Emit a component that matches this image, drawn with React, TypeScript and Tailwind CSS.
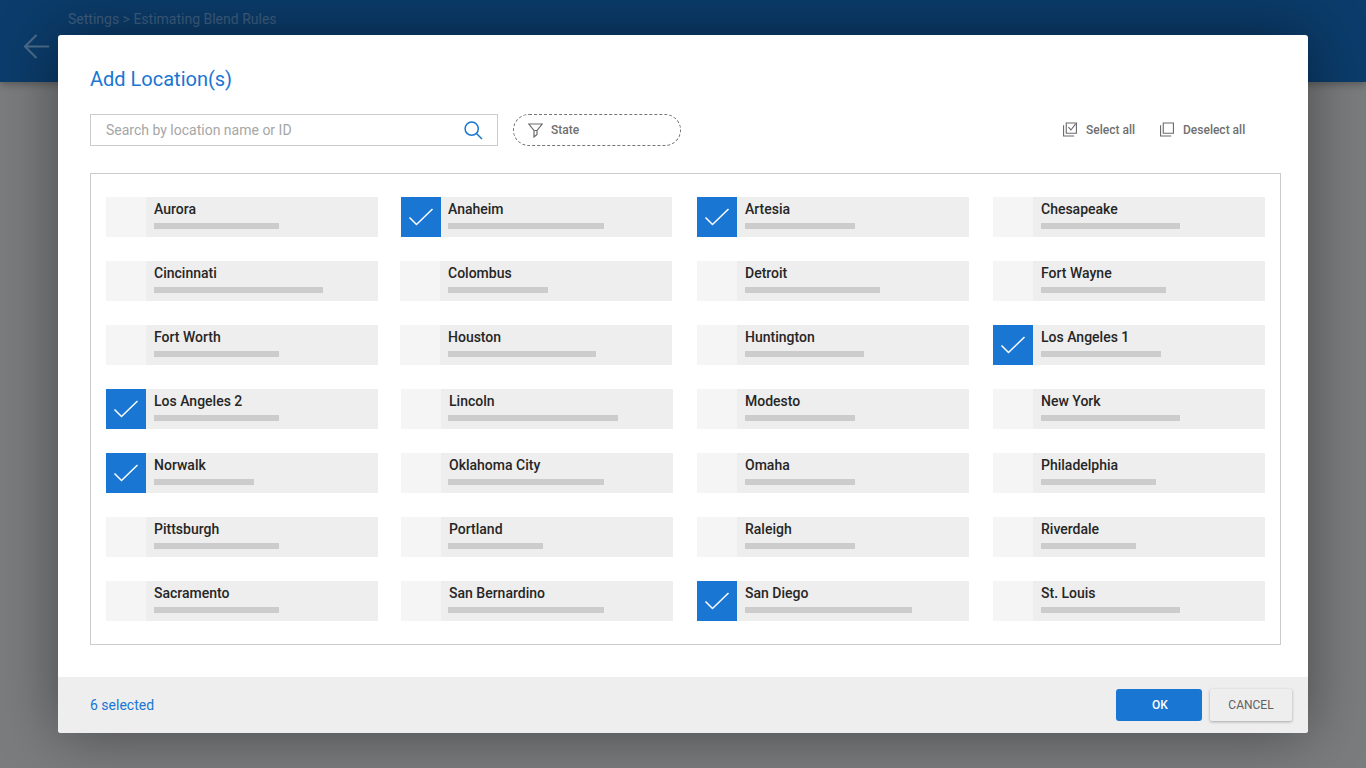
type Loc = { name: string; bar: number; checked?: boolean; variant?: 'checked' | 'plain' | 'shifted' };

const locations: Loc[][] = [
  [
    { name: 'Aurora', bar: 125 },
    { name: 'Anaheim', bar: 156, checked: true, variant: 'checked' },
    { name: 'Artesia', bar: 110, checked: true },
    { name: 'Chesapeake', bar: 139 },
  ],
  [
    { name: 'Cincinnati', bar: 169 },
    { name: 'Colombus', bar: 100, variant: 'plain' },
    { name: 'Detroit', bar: 135 },
    { name: 'Fort Wayne', bar: 125 },
  ],
  [
    { name: 'Fort Worth', bar: 125 },
    { name: 'Houston', bar: 148, variant: 'plain' },
    { name: 'Huntington', bar: 119 },
    { name: 'Los Angeles 1', bar: 120, checked: true },
  ],
  [
    { name: 'Los Angeles 2', bar: 125, checked: true },
    { name: 'Lincoln', bar: 170, variant: 'shifted' },
    { name: 'Modesto', bar: 110 },
    { name: 'New York', bar: 139 },
  ],
  [
    { name: 'Norwalk', bar: 100, checked: true },
    { name: 'Oklahoma City', bar: 156, variant: 'shifted' },
    { name: 'Omaha', bar: 110 },
    { name: 'Philadelphia', bar: 115 },
  ],
  [
    { name: 'Pittsburgh', bar: 125 },
    { name: 'Portland', bar: 95, variant: 'shifted' },
    { name: 'Raleigh', bar: 110 },
    { name: 'Riverdale', bar: 95 },
  ],
  [
    { name: 'Sacramento', bar: 125 },
    { name: 'San Bernardino', bar: 156, variant: 'shifted' },
    { name: 'San Diego', bar: 167, checked: true },
    { name: 'St. Louis', bar: 139 },
  ],
];

function Tile({ name, bar, checked, variant }: Loc) {
  // the second column sits a pixel off in some rows of the original
  const outer = variant === 'checked' ? 'ml-px w-[271px]' : variant === 'plain' ? 'w-[272px]' : variant === 'shifted' ? 'ml-px w-[272px]' : 'w-[272px]';
  const barOffset = variant === 'checked' || variant === 'shifted' ? '-ml-px' : '';
  const nameOffset = variant === 'checked' ? '-ml-px' : '';
  return (
    <div className={`flex h-10 ${outer}`}>
      <div className={`flex h-10 w-10 shrink-0 items-center justify-center ${checked ? 'bg-[#1976d2]' : 'bg-[#f5f5f5]'}`}>
        {checked && (
          <svg width="26" height="20" viewBox="0 0 26 20" fill="none" stroke="white" strokeWidth="1.5">
            <path d="M1.5 10.5 L8.5 17.5 L24.5 2" />
          </svg>
        )}
      </div>
      <div className="flex-1 bg-[#eeeeee] pl-2">
        <div className={`mt-[3px] text-[14px] leading-[18px] font-medium text-[#262626] ${nameOffset}`}>{name}</div>
        <div className={`mt-[5px] h-[6px] bg-[#cccccc] ${barOffset}`} style={{ width: bar }} />
      </div>
    </div>
  );
}

export default function App() {
  return (
    <div className="relative h-[768px] w-[1366px] overflow-hidden bg-[#7b7c7e] font-['Roboto',sans-serif]">
      <header className="flex h-[82px] bg-[#0b3c6b] shadow-[0_2px_8px_rgba(0,0,0,0.3)]">
        <div className="pt-[33px] pl-[23px]">
          <svg width="27" height="27" viewBox="0 0 27 27" fill="none" stroke="#4d6c8b" strokeWidth="2">
            <path d="M26 13.5 H2 M13.5 2 L2 13.5 L13.5 25" />
          </svg>
        </div>
        <div className="pt-[11px] pl-[18px] text-[14px] leading-4 text-[#3f5f80]">Settings &gt; Estimating Blend Rules</div>
      </header>

      <div className="absolute inset-0 flex items-center justify-center">
        <div className="flex h-[698px] w-[1250px] flex-col overflow-hidden rounded-[3px] bg-white shadow-[0_0_60px_rgba(0,0,0,0.42)]">
          <div className="flex-1 pt-[31px] pl-[32px]">
            <h1 className="text-[20px] leading-[26px] font-normal text-[#1976d2]">Add Location(s)</h1>

            <div className="mt-[22px] flex h-8 items-center">
              <div className="flex h-8 w-[408px] items-center justify-between border border-[#cccccc] pr-[14px] pl-[15px]">
                <span className="text-[14px] text-[#a6a6a6]">Search by location name or ID</span>
                <svg width="19" height="19" viewBox="0 0 19 19" fill="none" stroke="#1976d2" strokeWidth="1.5">
                  <circle cx="7.7" cy="7.7" r="6.6" />
                  <path d="M12.5 12.5 L18 18" />
                </svg>
              </div>
              <div className="ml-[15px] flex h-8 w-[168px] items-center rounded-full border border-dashed border-[#757575] pl-[14px]">
                <svg width="15" height="15" viewBox="0 0 15 15" fill="none" stroke="#6b6b6b" strokeWidth="1.2">
                  <path d="M0.8 1 H14.2 L9 7.5 V11.5 L6 14 V7.5 Z M6 7.5 H9" />
                </svg>
                <span className="ml-2 text-[12px] font-medium text-[#6f6f6f]">State</span>
              </div>
              <div className="ml-[382px] flex items-center">
                <svg className="mb-[2px]" width="14" height="15" viewBox="0 0 15 15" fill="none" stroke="#6b6b6b" strokeWidth="1.2">
                  <path d="M3.5 0.6 H14.4 V11.5 H3.5 Z M0.6 3 V14.4 H12" />
                  <path d="M5.8 5 L8.5 8 L13.5 1.5" />
                </svg>
                <span className="ml-[9px] text-[12px] font-medium text-[#6f6f6f]">Select all</span>
                <svg className="mb-[2px] ml-[25px]" width="14" height="15" viewBox="0 0 15 15" fill="none" stroke="#6b6b6b" strokeWidth="1.2">
                  <path d="M3.5 0.6 H14.4 V11.5 H3.5 Z M0.6 3 V14.4 H12" />
                </svg>
                <span className="ml-[9px] text-[12px] font-medium text-[#6f6f6f]">Deselect all</span>
              </div>
            </div>

            <div className="mt-[27px] flex h-[472px] w-[1191px] flex-col gap-6 border border-[#cccccc] pt-[23px] pl-[15px]">
              {locations.map((row, r) => (
                <div key={r} className="flex">
                  {row.map((loc, c) => (
                    <div key={loc.name} className={c === 0 ? 'w-[294px] shrink-0' : c === 1 ? 'w-[297px] shrink-0' : c === 2 ? 'w-[296px] shrink-0' : 'w-[272px] shrink-0'}>
                      <Tile {...loc} />
                    </div>
                  ))}
                </div>
              ))}
            </div>
          </div>

          <footer className="flex h-[56px] items-center justify-between bg-[#eeeeee] pr-4 pl-[32px]">
            <span className="text-[14px] text-[#1976d2]">6 selected</span>
            <div className="flex items-center gap-2">
              <button className="h-8 w-[86px] rounded-[3px] bg-[#1976d2] pl-0.5 text-[12px] font-medium text-white">OK</button>
              <button className="h-8 w-[82px] rounded-[2px] bg-[#eeeeee] text-[12px] text-[#616161] shadow-[0_1px_3px_rgba(0,0,0,0.3)]">CANCEL</button>
            </div>
          </footer>
        </div>
      </div>
    </div>
  );
}
